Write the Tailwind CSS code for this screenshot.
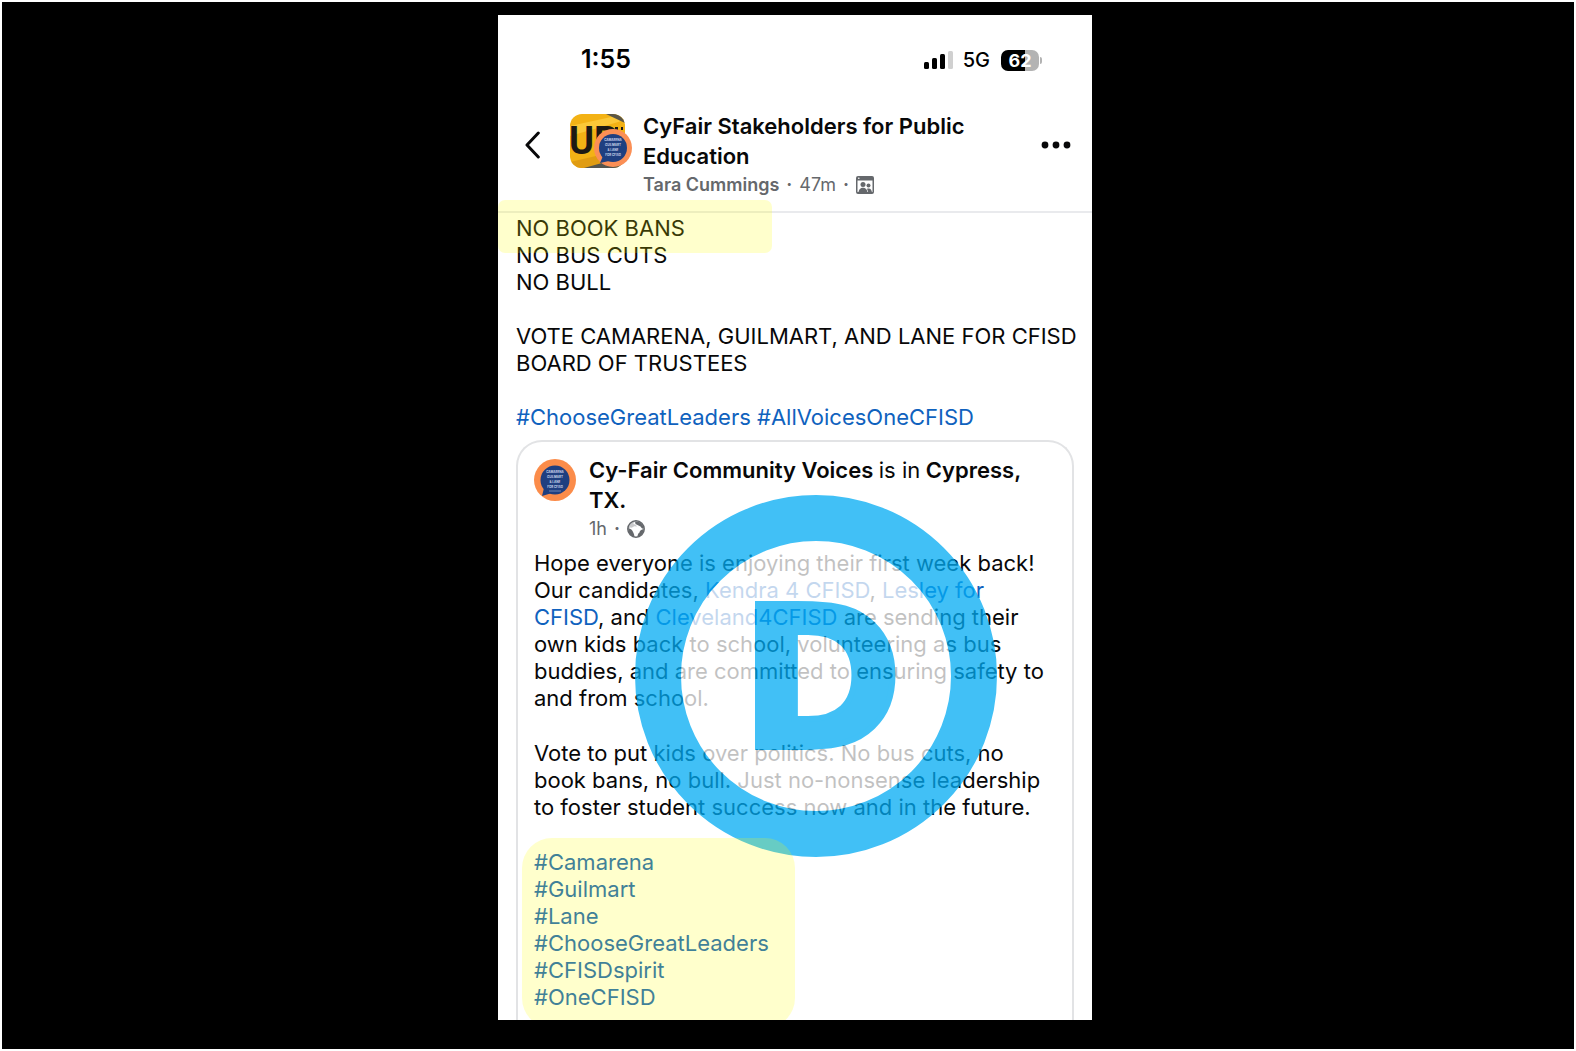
<!DOCTYPE html>
<html lang="en">
<head>
  <meta charset="UTF-8"/>
  <meta name="viewport" content="width=device-width, initial-scale=1"/>
  <script src="https://cdn.jsdelivr.net/npm/@tailwindcss/browser@4"></script>
  <title>CyFair Stakeholders for Public Education</title>
</head>
<body class="bg-white p-[2px] font-['Inter','Liberation_Sans',sans-serif] text-[#080809]">
  <div class="flex min-h-[calc(100vh-4px)] items-start justify-center bg-black pt-[13px] pl-[14px]">

    <!-- Phone screen -->
    <div class="relative w-full max-w-[594px] overflow-hidden bg-white">

      <!-- Status bar -->
      <div class="flex h-[90px] items-center justify-between pr-[50px] pl-[83px] text-black">
        <span class="text-[25px] font-semibold">1:55</span>
        <div class="flex items-center">
          <svg class="h-[20px] w-[30px]" viewBox="0 0 30 20">
            <rect x="0" y="12" width="5" height="7" rx="1.5"/>
            <rect x="8" y="8" width="5" height="11" rx="1.5"/>
            <rect x="16" y="4" width="5" height="15" rx="1.5"/>
            <rect x="24" y="1" width="5" height="18" rx="1.5" fill="#d0d0d0"/>
          </svg>
          <span class="ml-[9px] text-[20px] font-medium">5G</span>
          <div class="ml-[11px] h-[21px] w-[38px] rounded-[7px] bg-linear-to-r from-black from-63% to-[#b3b3b3] to-63% text-center text-[18px] leading-[21px] font-bold text-white">62</div>
          <span class="ml-px h-[7px] w-[2px] rounded-r-full bg-[#b3b3b3]"></span>
        </div>
      </div>

      <!-- Post header -->
      <header class="flex items-start border-b-2 border-[#e9eaed] pt-[6px] pr-[21px] pb-[12px] pl-[27px]">
        <button type="button" aria-label="Back" class="flex h-[68px] items-center">
          <svg class="h-[28px] w-[15px]" viewBox="0 0 15 28" fill="none" stroke="#080809" stroke-width="3" stroke-linecap="round" stroke-linejoin="round">
            <path d="M13.300 2L2 14l11.300 12"/>
          </svg>
        </button>
        <svg class="mt-[3px] ml-[30px] h-[55px] w-[62px] shrink-0" viewBox="0 0 62 55">
          <defs>
            <clipPath id="groupClip"><rect width="55" height="54" rx="12"/></clipPath>
          </defs>
          <g clip-path="url(#groupClip)">
            <rect width="55" height="54" fill="#f3b215"/>
            <path d="M0 12L55 0v6L0 22z" fill="#fbc838"/>
            <path d="M36 0h19v9z" fill="#5a5648"/>
            <path d="M0 48l26-6 12 12H0z" fill="#e09c12"/>
            <path d="M14 54l18-5 23-4v9z" fill="#55554f"/>
            <path d="M45 13h3v4h-3zM51 13h2v3h-2z" fill="#1d1a14"/>
            <text x="-1" y="40" font-size="38" font-weight="700" font-family="Liberation Sans Narrow, Roboto, sans-serif" fill="#1d1a14">UP</text>
          </g>
          <circle cx="43" cy="34" r="19" fill="#fb8f55"/>
          <circle cx="43" cy="34" r="14" fill="#1f3f80"/>
          <path d="M33 42l-3 7 9-2z" fill="#1f3f80"/>
          <g fill="#c9d3e8" font-size="3" font-weight="700" text-anchor="middle">
            <text x="43" y="27">CAMARENA</text>
            <text x="43" y="32">GUILMART</text>
            <text x="43" y="37">&amp; LANE</text>
            <text x="43" y="42">FOR CFISD</text>
          </g>
        </svg>
        <div class="ml-[11px] flex-1">
          <h1 class="text-[22px] leading-[30px] font-semibold">CyFair Stakeholders for Public<br>Education</h1>
          <div class="flex h-[28px] items-center gap-[7px] text-[18px] leading-[26px] text-[#65686c]">
            <span class="font-semibold">Tara Cummings</span>
            <span class="font-bold">·</span>
            <span>47m</span>
            <span class="font-bold">·</span>
            <svg class="size-[18px]" viewBox="0 0 18 18" fill="#65686c">
              <path d="M2 0h14a2 2 0 0 1 2 2v14a2 2 0 0 1-2 2H2a2 2 0 0 1-2-2V2a2 2 0 0 1 2-2zM1.500 4.500v11.500h15V4.500z" fill-rule="evenodd"/>
              <circle cx="7" cy="8.500" r="2.500"/>
              <circle cx="12.500" cy="9.500" r="2"/>
              <path d="M2.500 17c0-7 9-7 9 0zM11 12.800c3-1.200 5 .7 5 4.200h-3.500z"/>
              <circle cx="2.800" cy="2.300" r=".8" fill="#fff"/>
            </svg>
          </div>
        </div>
        <button type="button" aria-label="More options" class="flex h-[68px] items-center">
          <svg class="h-[8px] w-[30px]" viewBox="0 0 30 8" fill="#080809">
            <circle cx="4" cy="4" r="3.400"/>
            <circle cx="15" cy="4" r="3.400"/>
            <circle cx="26" cy="4" r="3.400"/>
          </svg>
        </button>
      </header>

      <!-- Post -->
      <main class="px-[18px] pt-[2px]">
        <div class="space-y-[27px] text-[22px] leading-[27px] whitespace-nowrap">
          <p>NO BOOK BANS<br>NO BUS CUTS<br>NO BULL</p>
          <p>VOTE CAMARENA, GUILMART, AND LANE FOR CFISD<br>BOARD OF TRUSTEES</p>
          <p class="text-[#0f62be]"><a href="#">#ChooseGreatLeaders</a> <a href="#">#AllVoicesOneCFISD</a></p>
        </div>

        <!-- Shared post -->
        <article class="mt-[9px] rounded-t-[26px] border-x-2 border-t-2 border-[#e2e3e5] px-[16px] pt-[13px] pb-[9px]">
          <div class="flex items-start">
            <svg class="mt-[4px] size-[42px] shrink-0" viewBox="0 0 42 42">
              <circle cx="21" cy="21" r="21" fill="#fb8c4a"/>
              <circle cx="21" cy="21" r="14.500" fill="#1f3f80"/>
              <path d="M10 29l-2 8 10-3z" fill="#1f3f80"/>
              <g fill="#c9d3e8" font-size="3" font-weight="700" text-anchor="middle">
                <text x="21" y="14">CAMARENA</text>
                <text x="21" y="19">GUILMART</text>
                <text x="21" y="24">&amp; LANE</text>
                <text x="21" y="29">FOR CFISD</text>
              </g>
              <path d="M15 32h12" stroke="#6f86b5" stroke-width="1"/>
            </svg>
            <div class="ml-[13px]">
              <h2 class="text-[22px] leading-[30px] font-semibold">Cy-Fair Community Voices <span class="font-normal">is in</span> Cypress,<br>TX.</h2>
              <div class="flex h-[28px] items-center gap-[7px] text-[18px] leading-[26px] text-[#65686c]">
                <span>1h</span>
                <span class="font-bold">·</span>
                <svg class="size-[18px]" viewBox="0 0 18 18">
                  <circle cx="9" cy="9" r="8.200" fill="#fff" stroke="#65686c" stroke-width="1.500"/>
                  <path d="M1.200 9c1-4 3-7 7-8l-2 3 2 .5 2 2-3-.2-2.500 1.500-1.500-.3z" fill="#65686c" fill-opacity=".35"/>
                  <path d="M1.200 8c1.500 1 3 .5 4 2.500s2 3 2.300 6.300C3.500 16 1 13 1.200 8zM8 1.500c5-.8 8.500 3 8.800 7-1.500.5-2.500-.5-3.300-2L10.500 5 8.500 4zM16.800 9c0 4-2.500 7-6.300 8 0-2 .5-3.500 2-4.500 0-2 2-3 4.300-3.500z" fill="#65686c"/>
                </svg>
              </div>
            </div>
          </div>

          <div class="mt-[7px] space-y-[28px] text-[22px] leading-[27px] whitespace-nowrap">
            <p>
              Hope everyone is enjoying their first week back!<br>
              Our candidates, <a href="#" class="text-[#0f62be]">Kendra 4 CFISD</a>, <a href="#" class="text-[#0f62be]">Lesley for<br>CFISD</a>, and <a href="#" class="text-[#0f62be]">Cleveland4CFISD</a> are sending their<br>
              own kids back to school, volunteering as bus<br>
              buddies, and are committed to ensuring safety to<br>
              and from school.
            </p>
            <p>
              Vote to put kids over politics. No bus cuts, no<br>
              book bans, no bull. Just no-nonsense leadership<br>
              to foster student success now and in the future.
            </p>
            <ul class="text-[#0f62be]">
              <li><a href="#">#Camarena</a></li>
              <li><a href="#">#Guilmart</a></li>
              <li><a href="#">#Lane</a></li>
              <li><a href="#">#ChooseGreatLeaders</a></li>
              <li><a href="#">#CFISDspirit</a></li>
              <li><a href="#">#OneCFISD</a></li>
            </ul>
          </div>
        </article>
      </main>

      <!-- Watermark and highlights -->
      <svg class="pointer-events-none absolute top-[480px] left-[137px] size-[362px] opacity-75" viewBox="0 0 362 362">
        <circle cx="181" cy="181" r="158" fill="#fff" stroke="#02acf4" stroke-width="46"/>
        <text x="105" y="252" font-family="DejaVu Sans, sans-serif" font-size="196" font-weight="700" fill="#02acf4" stroke="#02acf4" stroke-width="6">D</text>
      </svg>
      <div class="pointer-events-none absolute top-[185px] left-0 h-[53px] w-[274px] rounded-[7px] bg-[#ffff00]/20"></div>
      <div class="pointer-events-none absolute top-[823px] left-[24px] h-[190px] w-[273px] rounded-[30px] bg-[#ffff00]/20"></div>
    </div>
  </div>
</body>
</html>
